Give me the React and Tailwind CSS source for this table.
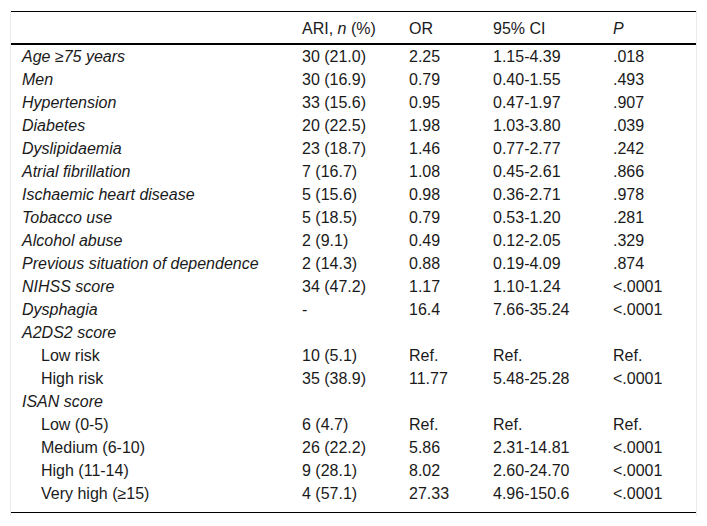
const rows = [
  { label: "Age ≥75 years", ari: "30 (21.0)", or: "2.25", ci: "1.15-4.39", p: ".018", italic: true },
  { label: "Men", ari: "30 (16.9)", or: "0.79", ci: "0.40-1.55", p: ".493", italic: true },
  { label: "Hypertension", ari: "33 (15.6)", or: "0.95", ci: "0.47-1.97", p: ".907", italic: true },
  { label: "Diabetes", ari: "20 (22.5)", or: "1.98", ci: "1.03-3.80", p: ".039", italic: true },
  { label: "Dyslipidaemia", ari: "23 (18.7)", or: "1.46", ci: "0.77-2.77", p: ".242", italic: true },
  { label: "Atrial fibrillation", ari: "7 (16.7)", or: "1.08", ci: "0.45-2.61", p: ".866", italic: true },
  { label: "Ischaemic heart disease", ari: "5 (15.6)", or: "0.98", ci: "0.36-2.71", p: ".978", italic: true },
  { label: "Tobacco use", ari: "5 (18.5)", or: "0.79", ci: "0.53-1.20", p: ".281", italic: true },
  { label: "Alcohol abuse", ari: "2 (9.1)", or: "0.49", ci: "0.12-2.05", p: ".329", italic: true },
  { label: "Previous situation of dependence", ari: "2 (14.3)", or: "0.88", ci: "0.19-4.09", p: ".874", italic: true },
  { label: "NIHSS score", ari: "34 (47.2)", or: "1.17", ci: "1.10-1.24", p: "<.0001", italic: true },
  { label: "Dysphagia", ari: "-", or: "16.4", ci: "7.66-35.24", p: "<.0001", italic: true },
  { label: "A2DS2 score", ari: "", or: "", ci: "", p: "", italic: true },
  { label: "Low risk", ari: "10 (5.1)", or: "Ref.", ci: "Ref.", p: "Ref.", indent: true },
  { label: "High risk", ari: "35 (38.9)", or: "11.77", ci: "5.48-25.28", p: "<.0001", indent: true },
  { label: "ISAN score", ari: "", or: "", ci: "", p: "", italic: true },
  { label: "Low (0-5)", ari: "6 (4.7)", or: "Ref.", ci: "Ref.", p: "Ref.", indent: true },
  { label: "Medium (6-10)", ari: "26 (22.2)", or: "5.86", ci: "2.31-14.81", p: "<.0001", indent: true },
  { label: "High (11-14)", ari: "9 (28.1)", or: "8.02", ci: "2.60-24.70", p: "<.0001", indent: true },
  { label: "Very high (≥15)", ari: "4 (57.1)", or: "27.33", ci: "4.96-150.6", p: "<.0001", indent: true },
];

export default function App() {
  return (
    <div
      className="w-[707px] h-[526px] bg-white pt-[10px] px-[10px] text-[16px] leading-[23px] text-[#1a1a1a]"
      style={{ fontFamily: '"Liberation Sans", Arial, sans-serif' }}
    >
      <div className="border-x border-[#ebebeb] pt-px pb-[3px]">
        <table className="w-[685px] table-fixed border-collapse">
          <colgroup>
            <col className="w-[280px]" />
            <col className="w-[107px]" />
            <col className="w-[84px]" />
            <col className="w-[120px]" />
            <col className="w-[94px]" />
          </colgroup>
          <thead>
            <tr className="h-[32px] border-t border-b-2 border-black">
              <th className="px-[11px] pb-[3px] align-bottom text-left font-normal"></th>
              <th className="px-[11px] pb-[3px] align-bottom text-left font-normal">
                ARI, <i>n</i> (%)
              </th>
              <th className="px-[11px] pb-[3px] align-bottom text-left font-normal">OR</th>
              <th className="px-[11px] pb-[3px] align-bottom text-left font-normal">95% CI</th>
              <th className="px-[11px] pb-[3px] align-bottom text-left font-normal">
                <i>P</i>
              </th>
            </tr>
          </thead>
          <tbody className="border-b border-black">
            {rows.map((r, i) => (
              <tr key={i} className={i === rows.length - 1 ? "h-[31px] align-top" : "h-[23px]"}>
                <td
                  className={
                    r.indent
                      ? "pl-[30px] pr-[11px] whitespace-nowrap"
                      : "px-[11px] italic whitespace-nowrap"
                  }
                >
                  {r.label}
                </td>
                <td className="px-[11px]">{r.ari}</td>
                <td className="px-[11px]">{r.or}</td>
                <td className="px-[11px]">{r.ci}</td>
                <td className="px-[11px]">{r.p}</td>
              </tr>
            ))}
          </tbody>
        </table>
      </div>
    </div>
  );
}
